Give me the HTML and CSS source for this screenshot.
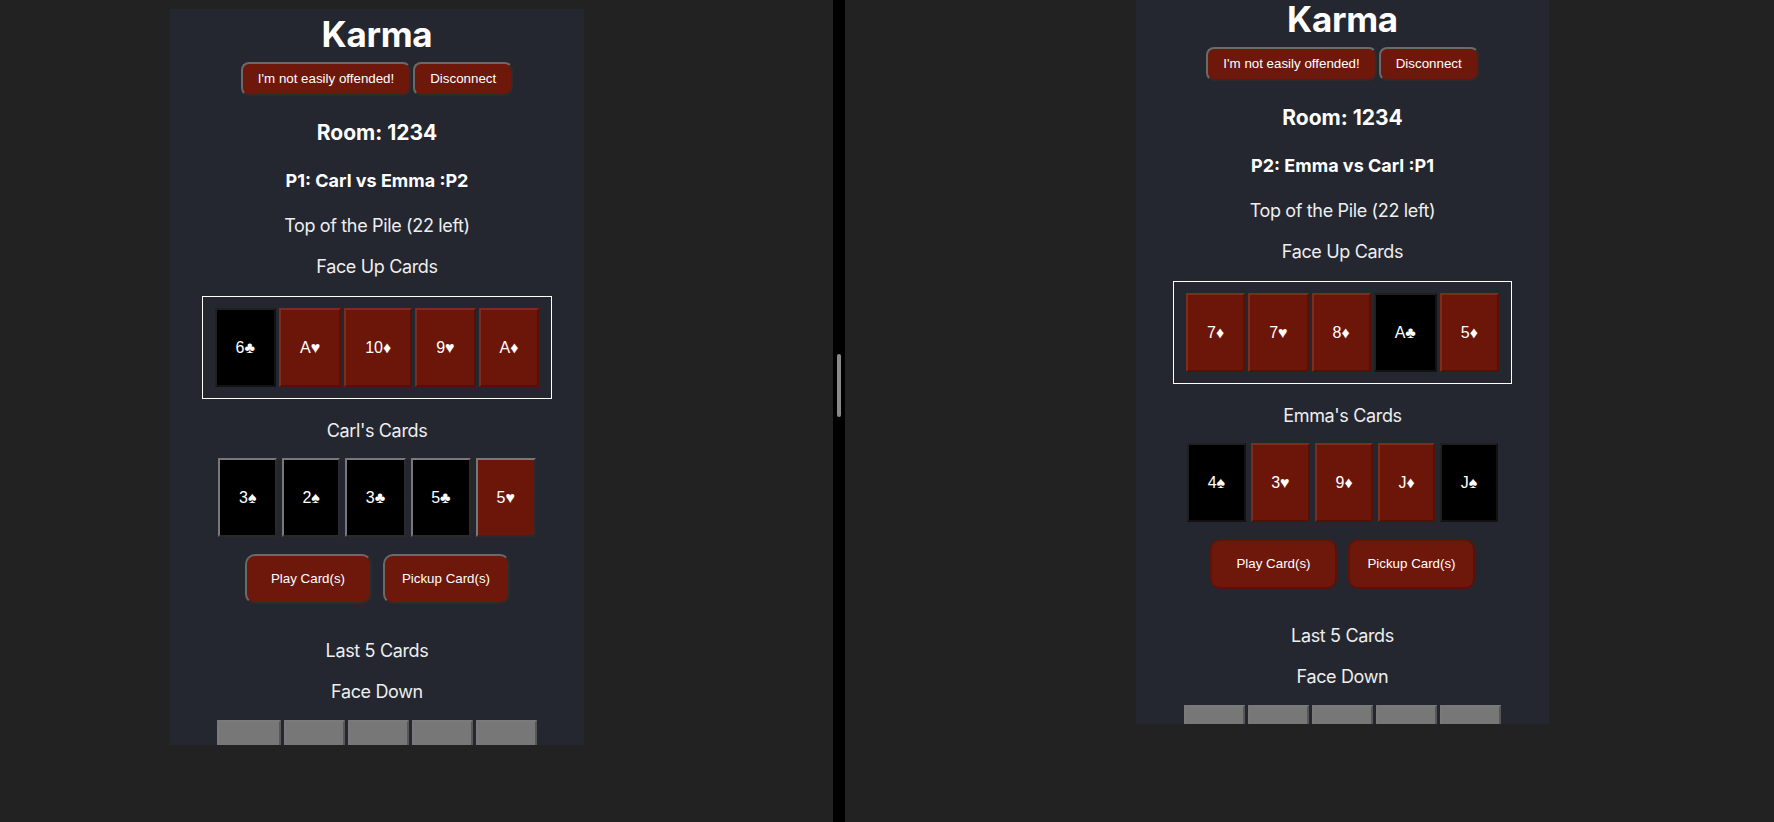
FILE: index.html
```html
<!DOCTYPE html>
<html lang="en">
<head>
<meta charset="utf-8">
<title>Karma</title>
<link rel="stylesheet" href="styles.css">
</head>
<body>
<div class="screen">
  <div class="pane pane-left">
    <main class="panel panel-left">
      <h1 class="title">Karma</h1>
      <div class="top-actions">
        <button class="btn">I'm not easily offended!</button>
        <button class="btn">Disconnect</button>
      </div>
      <h3 class="room">Room: 1234</h3>
      <h4 class="players">P1: Carl vs Emma :P2</h4>
      <p class="label label-pile">Top of the Pile (22 left)</p>
      <p class="label">Face Up Cards</p>
      <div class="faceup">
        <span class="card card-black">6♣</span>
        <span class="card card-red">A♥</span>
        <span class="card card-red">10♦</span>
        <span class="card card-red">9♥</span>
        <span class="card card-red">A♦</span>
      </div>
      <p class="label label-hand">Carl's Cards</p>
      <div class="hand hand-live">
        <span class="card card-black">3♠</span>
        <span class="card card-black">2♠</span>
        <span class="card card-black">3♣</span>
        <span class="card card-black">5♣</span>
        <span class="card card-red">5♥</span>
      </div>
      <div class="play-actions">
        <button class="btn btn-play">Play Card(s)</button>
        <button class="btn btn-play">Pickup Card(s)</button>
      </div>
      <p class="label label-last">Last 5 Cards</p>
      <p class="label">Face Down</p>
      <div class="facedown">
        <span class="card-down card-down-wide"></span>
        <span class="card-down"></span>
        <span class="card-down"></span>
        <span class="card-down"></span>
        <span class="card-down"></span>
      </div>
    </main>
  </div>
  <div class="divider"><span class="thumb"></span></div>
  <div class="pane pane-right">
    <main class="panel panel-right">
      <h1 class="title">Karma</h1>
      <div class="top-actions">
        <button class="btn">I'm not easily offended!</button>
        <button class="btn">Disconnect</button>
      </div>
      <h3 class="room">Room: 1234</h3>
      <h4 class="players">P2: Emma vs Carl :P1</h4>
      <p class="label label-pile">Top of the Pile (22 left)</p>
      <p class="label">Face Up Cards</p>
      <div class="faceup">
        <span class="card card-red">7♦</span>
        <span class="card card-red">7♥</span>
        <span class="card card-red">8♦</span>
        <span class="card card-black">A♣</span>
        <span class="card card-red">5♦</span>
      </div>
      <p class="label label-hand">Emma's Cards</p>
      <div class="hand">
        <span class="card card-black">4♠</span>
        <span class="card card-red">3♥</span>
        <span class="card card-red">9♦</span>
        <span class="card card-red">J♦</span>
        <span class="card card-black">J♠</span>
      </div>
      <div class="play-actions">
        <button class="btn btn-play btn-flat">Play Card(s)</button>
        <button class="btn btn-play btn-flat">Pickup Card(s)</button>
      </div>
      <p class="label label-last">Last 5 Cards</p>
      <p class="label">Face Down</p>
      <div class="facedown">
        <span class="card-down"></span>
        <span class="card-down"></span>
        <span class="card-down"></span>
        <span class="card-down"></span>
        <span class="card-down"></span>
      </div>
    </main>
  </div>
</div>
</body>
</html>
```
FILE: styles.css
```css
* { box-sizing: border-box; }

html, body {
  margin: 0;
  padding: 0;
  background: #222222;
  overflow: hidden;
}

body {
  font-family: Inter, "Noto Sans", "Liberation Sans", sans-serif;
  color: #ffffff;
}

.screen {
  display: flex;
  height: 822px;
  width: 1774px;
}

.pane {
  background: #222222;
  overflow: hidden;
  height: 822px;
}

.pane-left {
  width: 833px;
  padding: 9px 0 0 170px;
}

.pane-right {
  flex: 1;
  padding-left: 291px;
}

.divider {
  width: 12px;
  background: #000;
  display: flex;
  justify-content: center;
  align-items: flex-start;
  padding-top: 354px;
}

.thumb {
  width: 4px;
  height: 63px;
  border-radius: 2px;
  background: #8a8a8a;
}

.panel {
  background: #242730;
  text-align: center;
  overflow: hidden;
  color: #ffffff;
}

.panel-left {
  width: 414px;
  height: 736px;
}

.panel-right {
  width: 413px;
  height: 730px;
  margin-top: -6px;
}

.title, .room, .players, .label {
  margin: 0;
}

.title {
  font-size: 35px;
  line-height: 42px;
  font-weight: 700;
  letter-spacing: -0.3px;
  margin-top: 4px;
}

.top-actions {
  display: flex;
  justify-content: center;
  gap: 2px;
  margin-top: 7px;
}

.btn {
  font-family: "Liberation Sans", Arial, sans-serif;
  font-size: 13.33px;
  line-height: 16px;
  color: #ffffff;
  background: #6e170b;
  border: 2px solid;
  border-color: #6a6a6a #2c2c2c #2c2c2c #6a6a6a;
  border-radius: 8px;
  padding: 7px 15px;
}

.room {
  font-size: 21px;
  line-height: 25px;
  font-weight: 700;
  margin-top: 24px;
}

.players {
  font-size: 18px;
  line-height: 22px;
  font-weight: 700;
  margin-top: 25px;
}

.label {
  font-size: 18px;
  line-height: 22px;
  font-weight: 400;
  letter-spacing: -0.35px;
  color: #eeeeee;
  margin-top: 19px;
}

.label-pile { margin-top: 23px; }
.label-hand { margin-top: 21px; }
.label-last { margin-top: 36px; }

.faceup {
  display: flex;
  width: max-content;
  margin: 18px auto 0;
  gap: 3px;
  border: 1px solid #ffffff;
  padding: 11px 12px;
}

.card {
  display: block;
  font-family: "Liberation Sans", Arial, sans-serif;
  font-size: 16px;
  line-height: 19px;
  color: #ffffff;
  padding: 28px 19px;
  border: 2px solid;
}

.card-red {
  background: #6c160a;
  border-color: #7e2b20 #55100a #55100a #7e2b20;
}

.card-black {
  background: #000000;
  border-color: #202020 #121212 #121212 #202020;
}

.hand {
  display: flex;
  justify-content: center;
  gap: 5px;
  margin-top: 16px;
}

.hand .card {
  padding: 28px 18.5px;
}

.hand-live .card {
  border-color: #787878 #2a2a2a #2a2a2a #787878;
}

.play-actions {
  display: flex;
  justify-content: center;
  gap: 11px;
  margin-top: 17px;
}

.btn-play {
  width: 127px;
  height: 50px;
  padding: 0;
  border-radius: 10px;
}

.btn-flat {
  border-color: #5e1409 #5a1208 #5a1208 #5e1409;
}

.facedown {
  display: flex;
  justify-content: center;
  gap: 3px;
  margin-top: 17px;
}

.card-down {
  display: block;
  width: 61px;
  height: 79px;
  background: #777777;
  border: 2px solid;
  border-color: #7a7a7a #575757 #575757 #7a7a7a;
}

.card-down-wide {
  width: 64px;
}
```
